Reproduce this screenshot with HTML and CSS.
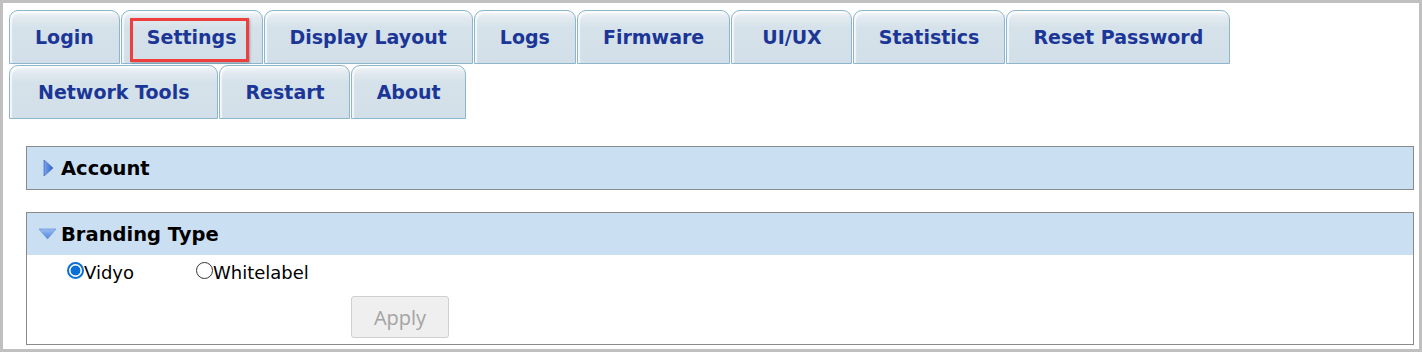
FILE: index.html
```html
<!DOCTYPE html>
<html>
<head>
<meta charset="utf-8">
<link rel="stylesheet" href="styles.css">
</head>
<body>
<div class="frame">
  <nav class="tabs">
    <a class="tab">Login</a>
    <a class="tab tab-marked">Settings<span class="mark"></span></a>
    <a class="tab">Display Layout</a>
    <a class="tab">Logs</a>
    <a class="tab">Firmware</a>
    <a class="tab tab-wide">UI/UX</a>
    <a class="tab">Statistics</a>
    <a class="tab tab-reset">Reset Password</a>
    <a class="tab tab-mid">Network Tools</a>
    <a class="tab tab-narrow">Restart</a>
    <a class="tab tab-narrow">About</a>
  </nav>

  <section class="panel panel-collapsed">
    <div class="panel-head">
      <svg class="icon-right" width="11" height="18" viewBox="0 0 11 18">
        <defs>
          <linearGradient id="gr" x1="0" y1="0" x2="1" y2="0">
            <stop offset="0" stop-color="#7fa6ea"/>
            <stop offset="1" stop-color="#2f62c8"/>
          </linearGradient>
        </defs>
        <path d="M1 1 L10 9 L1 17 Z" fill="url(#gr)" stroke="#3b6fd0" stroke-width="0.8" stroke-linejoin="round"/>
      </svg>
      <span class="panel-title">Account</span>
    </div>
  </section>

  <section class="panel">
    <div class="panel-head">
      <svg class="icon-down" width="19" height="12" viewBox="0 0 19 12">
        <defs>
          <linearGradient id="gd" x1="0" y1="0" x2="0" y2="1">
            <stop offset="0" stop-color="#9cbcf0"/>
            <stop offset="1" stop-color="#4f85dc"/>
          </linearGradient>
        </defs>
        <path d="M1 1 L18 1 L9.5 11 Z" fill="url(#gd)" stroke="#6a97e0" stroke-width="0.8" stroke-linejoin="round"/>
      </svg>
      <span class="panel-title">Branding Type</span>
    </div>
    <div class="panel-body">
      <div class="radios">
        <label class="radio"><span class="dot dot-on"></span>Vidyo</label>
        <label class="radio"><span class="dot"></span>Whitelabel</label>
      </div>
      <div class="actions">
        <button class="btn" disabled>Apply</button>
      </div>
    </div>
  </section>
</div>
</body>
</html>
```

FILE: styles.css
```css
* { box-sizing: border-box; }

html, body {
  margin: 0;
  padding: 0;
  background: #ffffff;
}

.frame {
  width: 1422px;
  height: 352px;
  border: 3px solid #c0c0c0;
  background: #ffffff;
  overflow: hidden;
}

.tabs {
  display: flex;
  flex-wrap: wrap;
  column-gap: 1px;
  row-gap: 1px;
  padding: 7px 0 0 6px;
  width: 1300px;
}

.tab {
  position: relative;
  display: flex;
  align-items: center;
  height: 54px;
  padding: 0 25px;
  border: 1px solid #8db6cd;
  border-radius: 9px 9px 0 0;
  background: linear-gradient(#f4f7f9 0px, #e2eaf0 7px, #d6e2ea 16px, #d3dfe8 100%);
  box-shadow: inset 2px 2px 1px rgba(255,255,255,0.7);
  font-family: "DejaVu Sans", Verdana, sans-serif;
  font-weight: bold;
  font-size: 19px;
  color: #1b3696;
  white-space: nowrap;
}

.tab-wide {
  padding: 0 29px 0 30px;
}

.tab-reset {
  padding: 0 26px;
}

.tab-mid {
  padding: 0 28px;
}

.tab-narrow {
  padding: 0 24px 0 25px;
}

.mark {
  position: absolute;
  left: 8px;
  top: 7px;
  width: 119px;
  height: 44px;
  border: 3px solid #ef3e3e;
  box-shadow: 1px 1px 2px rgba(0,0,0,0.3);
}

.panel {
  margin: 0 5px 0 23px;
  border: 1px solid #8a8a8a;
  background: #ffffff;
}

.panel-collapsed {
  margin-top: 27px;
}

.panel-collapsed + .panel {
  margin-top: 22px;
}

.panel-head {
  display: flex;
  align-items: center;
  height: 42px;
  background: #cbdff3;
  font-family: "DejaVu Sans", Verdana, sans-serif;
  font-weight: bold;
  font-size: 19.5px;
  color: #000000;
}

.panel-collapsed .panel-head {
  padding-left: 16px;
}

.panel-collapsed .panel-title {
  margin-left: 7px;
}

.panel:not(.panel-collapsed) .panel-head {
  padding-left: 11px;
}

.panel:not(.panel-collapsed) .panel-title {
  margin-left: 4px;
}

.panel-body {
  height: 89px;
  padding: 6px 0 0 40px;
  font-family: "DejaVu Sans", Verdana, sans-serif;
  font-size: 18px;
  color: #000000;
}

.radios {
  display: grid;
  grid-template-columns: 129px auto;
  height: 22px;
  align-items: center;
}

.radio {
  display: flex;
  align-items: center;
}

.dot {
  display: inline-block;
  width: 17px;
  height: 17px;
  border: 1px solid #333333;
  border-radius: 50%;
  background: #ffffff;
  margin-top: -3px;
}

.dot-on {
  border: 2px solid #0a6fd6;
  background: radial-gradient(circle, #0a6fd6 0 4.5px, #ffffff 5.3px);
}

.actions {
  padding: 13px 0 0 284px;
}

.btn {
  width: 98px;
  height: 42px;
  border: 1px solid #cfcfcf;
  border-radius: 3px;
  background: #efefef;
  color: #a3a3a3;
  font-family: "Open Sans", "DejaVu Sans", sans-serif;
  font-size: 20px;
  padding: 0;
}
```
